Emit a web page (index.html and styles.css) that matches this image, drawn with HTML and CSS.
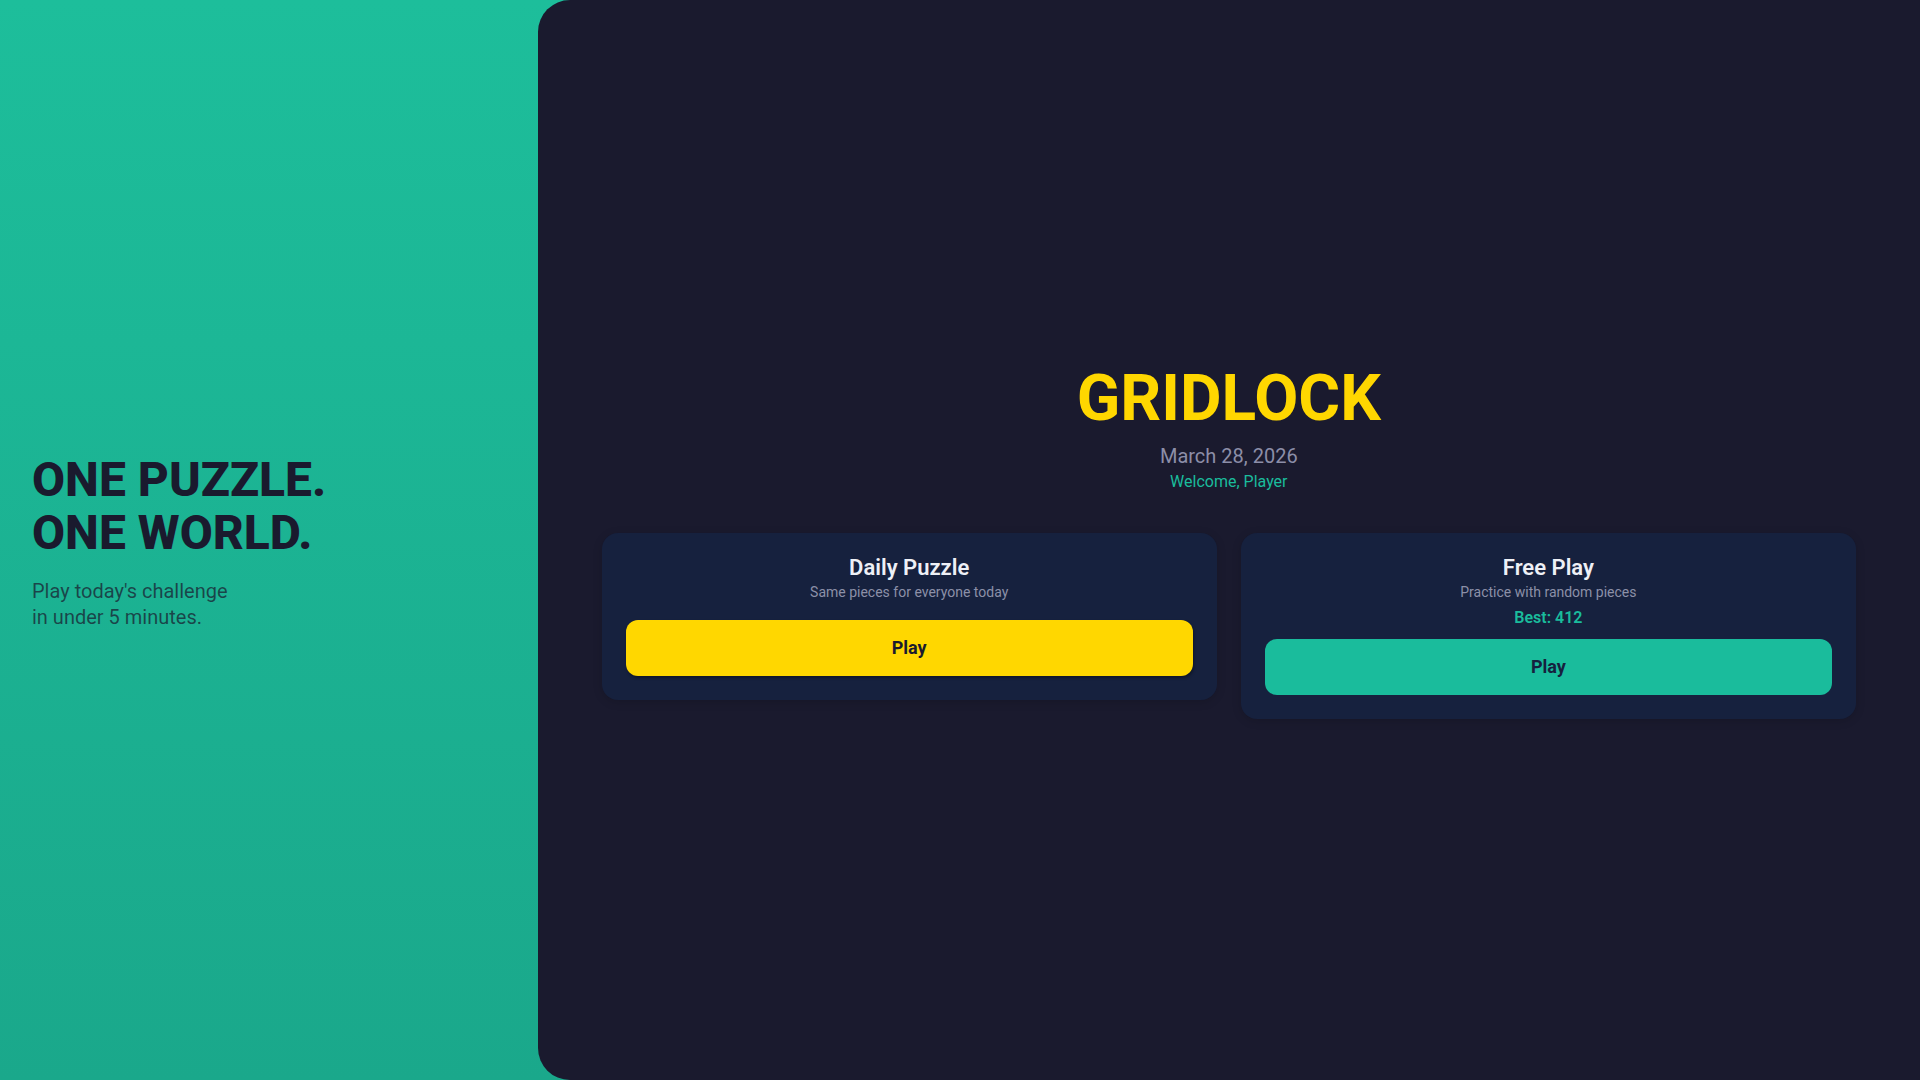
FILE: index.html
```html
<!DOCTYPE html>
<html lang="en">
<head>
<meta charset="utf-8">
<title>Gridlock</title>
<link rel="stylesheet" href="styles.css">
</head>
<body>
<div class="app">
  <aside class="hero">
    <h1 class="hero-title">ONE PUZZLE.<br>ONE WORLD.</h1>
    <p class="hero-sub">Play today's challenge<br>in under 5 minutes.</p>
  </aside>
  <main class="main">
    <div class="content">
      <header class="header">
        <h2 class="logo">GRIDLOCK</h2>
        <div class="date">March 28, 2026</div>
        <div class="welcome">Welcome, Player</div>
      </header>
      <div class="cards">
        <section class="card">
          <h3 class="card-title">Daily Puzzle</h3>
          <p class="card-sub">Same pieces for everyone today</p>
          <button class="btn btn-yellow">Play</button>
        </section>
        <section class="card">
          <h3 class="card-title">Free Play</h3>
          <p class="card-sub">Practice with random pieces</p>
          <div class="best">Best: 412</div>
          <button class="btn btn-teal">Play</button>
        </section>
      </div>
    </div>
  </main>
</div>
</body>
</html>
```
FILE: styles.css
```css
* { box-sizing: border-box; }
html, body { margin: 0; padding: 0; height: 100%; }
body {
  font-family: Roboto, "Liberation Sans", Arial, sans-serif;
  background: #1a1a2e;
}
.app {
  display: flex;
  width: 1920px;
  height: 1080px;
  background: linear-gradient(180deg, #1dbe9b 0%, #1aa88b 100%);
}
.hero {
  width: 28%;
  flex: none;
  padding: 4px 32px 0;
  display: flex;
  flex-direction: column;
  justify-content: center;
}
.hero-title {
  margin: 0;
  font-size: 48px;
  line-height: 1.1;
  font-weight: 800;
  color: #1a1a2e;
  letter-spacing: 0;
}
.hero-sub {
  margin: 18px 0 0;
  font-size: 20px;
  line-height: 1.3;
  color: rgba(26, 26, 46, 0.72);
}
.main {
  flex: 1;
  background: #1a1a2e;
  border-radius: 32px 0 0 32px;
  display: flex;
  align-items: center;
  padding: 0 64px;
}
.content { width: 100%; }
.header {
  text-align: center;
  padding-top: 3px;
  margin-bottom: 42px;
}
.logo {
  margin: 0;
  font-size: 64px;
  line-height: 1.1;
  font-weight: 700;
  color: #ffd700;
}
.date {
  margin-top: 9px;
  font-size: 20px;
  color: #8c8ea8;
}
.welcome {
  margin-top: 4px;
  font-size: 16px;
  color: #1abc9c;
}
.cards {
  display: grid;
  grid-template-columns: 1fr 1fr;
  gap: 24px;
  align-items: start;
}
.card {
  background: #16213e;
  border-radius: 16px;
  padding: 24px;
  display: flex;
  flex-direction: column;
  align-items: center;
  box-shadow: 0 2px 10px rgba(0, 0, 0, 0.15);
}
.card-title {
  margin: 0 0 5px;
  font-size: 22px;
  line-height: 1;
  font-weight: 600;
  color: #eef0f6;
}
.card-sub {
  margin: 0 0 8px;
  font-size: 14px;
  color: #8c90a8;
}
.best {
  font-size: 16px;
  font-weight: 600;
  color: #1abc9c;
}
.btn {
  margin-top: 12px;
  width: 100%;
  height: 56px;
  border: none;
  border-radius: 12px;
  font-family: inherit;
  font-size: 18px;
  font-weight: 700;
  color: #1a1a2e;
  cursor: pointer;
}
.btn-yellow {
  background: #ffd700;
  box-shadow: 1px 2px 3px rgba(0, 0, 0, 0.35);
}
.btn-teal {
  background: #1abc9c;
  color: #16213e;
}
```
